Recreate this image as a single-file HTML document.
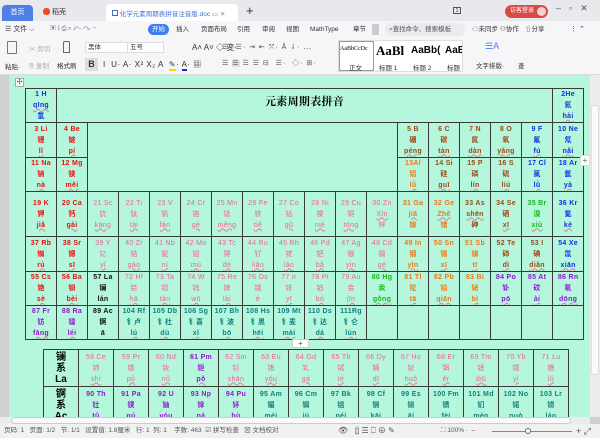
<!DOCTYPE html>
<html><head><meta charset="utf-8">
<style>
*{margin:0;padding:0;box-sizing:border-box}
body{width:600px;height:438px;overflow:hidden;position:relative;background:#d0d0d0;font-family:"Liberation Sans","Noto Sans CJK SC",sans-serif;font-size:8px;color:#333}
.a{position:absolute}
#tabs{left:0;top:0;width:600px;height:21px;background:#e9e9ed}
#menu{left:0;top:21px;width:600px;height:17px;background:#f6f6f8}
#rib{left:0;top:38px;width:600px;height:37px;background:#f6f6f8;border-bottom:1px solid #ddd}
#page{left:9px;top:75px;width:581px;height:342px;background:#b4f7dc;overflow:hidden}
table{border-collapse:collapse;table-layout:fixed;position:absolute}
td{border:1px solid #3a3a3a;text-align:center;vertical-align:middle;font-size:7px;line-height:11px;font-weight:bold;white-space:nowrap;overflow:hidden;font-family:"Liberation Sans","Noto Sans CJK SC",sans-serif;letter-spacing:0.3px}
td i{font-style:normal;text-decoration:underline wavy #d08888;text-decoration-thickness:1px;text-underline-offset:1px}
.r{color:#e81010}.p{color:#f0609a;font-weight:normal}.o{color:#f07818}.b{color:#a04818}.u{color:#1030e0}.g{color:#18b818}.v{color:#9018d0}.t{color:#108080}.k{color:#111}
.e{border:none}
#vs{left:590px;top:75px;width:10px;height:342px;background:#ececec}
#hs{left:0;top:417px;width:590px;height:7px;background:#ececec}
#st{left:0;top:424px;width:600px;height:14px;background:#f1f1f1;font-size:6.5px;color:#555;line-height:14px;white-space:nowrap}
.ui{font-size:7px;color:#333;white-space:nowrap}
.lb{font-size:10px!important;line-height:11px;color:#000;letter-spacing:0}
</style></head><body>
<div id="tabs" class="a">
 <div class="a" style="left:2px;top:5px;width:31px;height:16px;background:#4f7fe6;border-radius:4px 4px 0 0;color:#fff;font-size:7px;text-align:center;line-height:15px">首页</div>
 <div class="a ui" style="left:43px;top:6px;width:60px;height:15px;line-height:14px"><span style="display:inline-block;width:7px;height:7px;background:#f04a1a;border-radius:3px;vertical-align:-1px"></span> 稻壳</div>
 <div class="a" style="left:106px;top:4px;width:132px;height:17px;background:#fff;border-radius:4px 4px 0 0"></div>
 <div class="a" style="left:112px;top:8px;color:#4070d0;font-size:6.5px;white-space:nowrap"><span style="display:inline-block;width:6px;height:6px;border:1px solid #4070d0"></span> 化学元素周期表拼音注音版.doc <span style="color:#888">▭ ✕</span></div>
 <div class="a" style="left:246px;top:3px;font-size:13px;color:#333">+</div>
 <div class="a ui" style="left:453px;top:7px;border:1px solid #555;width:8px;height:7px;font-size:5px;text-align:center;line-height:6px">1</div>
 <div class="a" style="left:505px;top:5px;width:43px;height:13px;background:#d84c46;border-radius:7px;color:#fff;font-size:6px;line-height:13px;padding-left:5px">访客登录<span style="position:absolute;right:2px;top:2px;width:9px;height:9px;border-radius:5px;background:#f4d0ce"></span></div>
 <div class="a" style="left:556px;top:3px;font-size:9px;color:#555;letter-spacing:8px">–▫✕</div>
</div>
<div id="menu" class="a ui" style="line-height:17px">
 <span class="a" style="left:5px">☰ 文件 ⌵</span>
 <span class="a" style="left:50px;color:#666;font-size:6px">▣ ⟟ ⎙ ⌕ ↶· ↷· ▿</span>
 <span class="a" style="left:148px;top:3px;width:21px;height:11px;background:#3f7ef0;border-radius:6px;color:#fff;line-height:11px;text-align:center;font-size:6.5px">开始</span>
 <span class="a" style="left:176px;font-size:6.5px">插入</span><span class="a" style="left:201px;font-size:6.5px">页面布局</span><span class="a" style="left:237px;font-size:6.5px">引用</span><span class="a" style="left:262px;font-size:6.5px">审阅</span><span class="a" style="left:286px;font-size:6.5px">视图</span><span class="a" style="left:310px;font-size:6.5px">MathType</span><span class="a" style="left:353px;font-size:6.5px">章节</span>
 <span class="a" style="left:372px;top:3px;width:7px;height:11px;background:#ccc"></span>
 <span class="a" style="left:385px;top:2px;width:80px;height:13px;background:#ebebef;border-radius:7px;line-height:13px;padding-left:4px;color:#555;font-size:6.5px">⌕查找命令、搜索模板</span>
 <span class="a" style="left:472px;font-size:6.5px">☁未同步</span><span class="a" style="left:500px;font-size:6.5px">⚇协作</span><span class="a" style="left:525px;font-size:6.5px">⇧分享</span><span class="a" style="left:570px">⋮ ⌃</span>
</div>
<div id="rib" class="a ui">
 <span class="a" style="left:7px;top:3px;width:10px;height:13px;border:1px solid #777;border-radius:1px"></span><span class="a" style="left:5px;top:23px;font-size:6.5px">粘贴·</span>
 <span class="a" style="left:29px;top:5px;color:#aaa;font-size:6.5px">✂ 剪切</span><span class="a" style="left:29px;top:22px;color:#aaa;font-size:6.5px">⎘ 复制</span>
 <span class="a" style="left:63px;top:3px;width:7px;height:12px;border:1px solid #666;border-radius:2px 2px 0 0"></span><span class="a" style="left:57px;top:22px;font-size:6.5px">格式刷</span>
 <span class="a" style="left:85px;top:4px;width:78px;height:11px;background:#fff;border:1px solid #ddd;line-height:9px;padding-left:2px;font-size:6.5px">黑体</span>
 <span class="a" style="left:127px;top:4px;width:37px;height:11px;background:#fff;border:1px solid #ddd;line-height:9px;padding-left:2px;font-size:6.5px">五号</span>
 <span class="a" style="left:192px;top:4px;font-size:8px">A˄ A˅ ◇ 变·</span>
 <span class="a" style="left:85px;top:20px;width:13px;height:13px;background:#ddd;font-weight:bold;font-size:9px;text-align:center;line-height:13px">B</span>
 <span class="a" style="left:103px;top:21px;font-size:8px;letter-spacing:0.5px">I &nbsp;U· A· X² X₂ A &nbsp;<span style="border-bottom:2px solid #f0e000">✎</span>· <span style="border-bottom:2px solid #2020e0">A</span>· ▦</span>
 <span class="a" style="left:222px;top:4px;font-size:7px;color:#555;letter-spacing:1px">☰· ☰· ⇥ ⇤ ⤧· Å ⇃· ⋯</span>
 <span class="a" style="left:222px;top:20px;font-size:7px;color:#555;letter-spacing:1px">☰ <span style="background:#ddd">☰</span> ☰ ☰ ⊟ &nbsp;☰· &nbsp;◇· ⊞·</span>
 <div class="a" style="left:338px;top:2px;width:125px;height:32px;background:#fff;border:1px solid #ddd;overflow:hidden">
 <div class="a" style="left:0;top:0;width:35px;height:30px;border:1px solid #999"></div>
 <span class="a" style="left:1px;top:5px;font-family:'Liberation Serif',serif;font-size:6px;color:#000">AaBbCcDc</span>
 <span class="a" style="left:37px;top:2px;font-family:'Liberation Serif',serif;font-size:13px;font-weight:bold;color:#000">AaBl</span>
 <span class="a" style="left:72px;top:4px;font-size:10px;font-weight:bold;color:#000">AaBb(</span>
 <span class="a" style="left:106px;top:4px;font-size:10px;font-weight:bold;color:#000">AaBbC</span>
 <span class="a" style="left:10px;top:21px;font-size:6.5px">正文</span><span class="a" style="left:40px;top:21px;font-size:6.5px">标题 1</span><span class="a" style="left:74px;top:21px;font-size:6.5px">标题 2</span><span class="a" style="left:108px;top:21px;font-size:6.5px">标题 3</span>
 </div>
 <span class="a" style="left:485px;top:3px;font-size:9px;color:#4a7ee8">☰A</span><span class="a" style="left:476px;top:22px;font-size:6.5px">文字排版·</span>
 <span class="a" style="left:518px;top:22px;font-size:6.5px">查</span>
</div>
<div id="page" class="a">
 <div class="a" style="left:6px;top:3px;width:9px;height:9px;background:#fff;border:1px solid #aaa;font-size:7px;line-height:7px;text-align:center;color:#555">✣</div>
 <table style="left:16px;top:13px;width:558px">
  <colgroup><col span="18" style="width:31px"></colgroup>
  <tr style="height:34px"><td class="u">1 H<br><i>qīng</i><br>氢</td><td colspan="16" style="font-family:'Noto Serif CJK SC',serif;font-size:11px;color:#000;vertical-align:top;padding-top:7px">元素周期表拼音</td><td class="u">2He<br>氦<br><i>hài</i></td></tr>
  <tr style="height:35px"><td class="r">3 Li<br>锂<br><i>lǐ</i></td><td class="r">4 Be<br>铍<br><i>pí</i></td><td colspan="10" rowspan="2" class="e" style="border-bottom:1px solid #3a3a3a"></td><td class="b">5 B<br>硼<br><i>péng</i></td><td class="b">6 C<br>碳<br><i>tàn</i></td><td class="b">7 N<br>氮<br><i>dàn</i></td><td class="b">8 O<br>氧<br><i>yǎng</i></td><td class="u">9 F<br>氟<br><i>fú</i></td><td class="u">10 Ne<br>氖<br><i>nǎi</i></td></tr>
  <tr style="height:33px"><td class="r">11 Na<br>钠<br><i>nà</i></td><td class="r">12 Mg<br>镁<br><i>měi</i></td><td class="o">13Al<br>铝<br><i>lǚ</i></td><td class="b">14 Si<br>硅<br><i>guī</i></td><td class="b">15 P<br>磷<br><i>lín</i></td><td class="b">16 S<br>硫<br><i>liú</i></td><td class="u">17 Cl<br>氯<br><i>lǜ</i></td><td class="u">18 Ar<br>氩<br><i>yà</i></td></tr>
  <tr style="height:45px"><td class="r">19 K<br>钾<br><i>jiǎ</i></td><td class="r">20 Ca<br>钙<br><i>gài</i></td><td class="p">21 Sc<br>钪<br><i>kàng</i></td><td class="p">22 Ti<br>钛<br><i>tài</i></td><td class="p">23 V<br>钒<br><i>fán</i></td><td class="p">24 Cr<br>铬<br><i>gè</i></td><td class="p">25 Mn<br>锰<br><i>měng</i></td><td class="p">26 Fe<br>铁<br><i>tiě</i></td><td class="p">27 Co<br>钴<br><i>gǔ</i></td><td class="p">28 Ni<br>镍<br><i>niè</i></td><td class="p">29 Cu<br>铜<br><i>tóng</i></td><td class="p">30 Zn<br><i>Xīn</i><br>锌</td><td class="o">31 Ga<br><i>jiā</i><br>镓</td><td class="o">32 Ge<br><i>Zhě</i><br>锗</td><td class="b">33 As<br><i>shēn</i><br>砷</td><td class="b">34 Se<br>硒<br><i>xī</i></td><td class="g">35 Br<br>溴<br><i>xiù</i></td><td class="u">36 Kr<br>氪<br><i>kè</i></td></tr>
  <tr style="height:35px"><td class="r">37 Rb<br>铷<br><i>rú</i></td><td class="r">38 Sr<br>锶<br><i>sī</i></td><td class="p">39 Y<br>钇<br><i>yǐ</i></td><td class="p">40 Zr<br>锆<br><i>gào</i></td><td class="p">41 Nb<br>铌<br><i>ní</i></td><td class="p">42 Mo<br>钼<br><i>mù</i></td><td class="p">43 Tc<br>锝<br><i>dé</i></td><td class="p">44 Ru<br>钌<br><i>liǎo</i></td><td class="p">45 Rh<br>铑<br><i>lǎo</i></td><td class="p">46 Pd<br>钯<br><i>bǎ</i></td><td class="p">47 Ag<br>银<br><i>yín</i></td><td class="p">48 Cd<br>镉<br><i>gé</i></td><td class="o">49 In<br>铟<br><i>yīn</i></td><td class="o">50 Sn<br>锡<br><i>xī</i></td><td class="o">51 Sb<br>锑<br><i>tī</i></td><td class="b">52 Te<br>碲<br><i>dì</i></td><td class="b">53 I<br>碘<br><i>diǎn</i></td><td class="u">54 Xe<br>氙<br><i>xiān</i></td></tr>
  <tr style="height:34px"><td class="r">55 Cs<br>铯<br><i>sè</i></td><td class="r">56 Ba<br>钡<br><i>bèi</i></td><td class="k">57 La<br>镧<br>lán</td><td class="p">72 Hf<br>铪<br><i>hā</i></td><td class="p">73 Ta<br>钽<br><i>tǎn</i></td><td class="p">74 W<br>钨<br><i>wū</i></td><td class="p">75 Re<br>铼<br><i>lái</i></td><td class="p">76 Os<br>锇<br>é</td><td class="p">77 Ir<br>铱<br><i>yī</i></td><td class="p">78 Pt<br>铂<br><i>bó</i></td><td class="p">79 Au<br>金<br><i>jīn</i></td><td class="g">80 Hg<br>汞<br><i>gǒng</i></td><td class="o">81 Tl<br>铊<br><i>tā</i></td><td class="o">82 Pb<br>铅<br><i>qiān</i></td><td class="o">83 Bi<br>铋<br><i>bì</i></td><td class="v">84 Po<br>钋<br><i>pō</i></td><td class="v">85 At<br>砹<br><i>ài</i></td><td class="v">86 Rn<br>氡<br><i>dōng</i></td></tr>
  <tr style="height:34px"><td class="v">87 Fr<br>钫<br><i>fāng</i></td><td class="v">88 Ra<br>镭<br><i>léi</i></td><td class="k">89 Ac<br>锕<br>ā</td><td class="t">104 Rf<br>钅卢<br><i>lú</i></td><td class="t">105 Db<br>钅杜<br><i>dù</i></td><td class="t">106 Sg<br>钅喜<br><i>xǐ</i></td><td class="t">107 Bh<br>钅波<br><i>bō</i></td><td class="t">108 Hs<br>钅黑<br><i>hēi</i></td><td class="t">109 Mt<br>钅麦<br><i>mài</i></td><td class="t">110 Ds<br>钅达<br><i>dá</i></td><td class="t">111Rg<br>钅仑<br><i>lún</i></td><td></td><td></td><td></td><td></td><td></td><td></td><td></td></tr>
 </table>
 <div class="a" style="left:283px;top:264px;width:17px;height:9px;background:#fff;border:1px solid #ccc;font-size:8px;line-height:7px;text-align:center;color:#555">+</div>
 <table style="left:34px;top:274px;width:525px">
  <colgroup><col style="width:35px"><col span="14" style="width:35px"></colgroup>
  <tr style="height:37px"><td class="lb">镧<br>系<br>La</td><td class="p">58 Ce<br>铈<br><i>shì</i></td><td class="p">59 Pr<br>镨<br><i>pǔ</i></td><td class="p">60 Nd<br>钕<br><i>nǚ</i></td><td class="v">61 Pm<br>钷<br><i>pǒ</i></td><td class="p">62 Sm<br>钐<br><i>shān</i></td><td class="p">63 Eu<br>铕<br><i>yǒu</i></td><td class="p">64 Gd<br>钆<br><i>gá</i></td><td class="p">65 Tb<br>铽<br><i>tè</i></td><td class="p">66 Dy<br>镝<br><i>dī</i></td><td class="p">67 Ho<br>钬<br><i>huǒ</i></td><td class="p">68 Er<br>铒<br><i>ěr</i></td><td class="p">69 Tm<br>铥<br><i>diū</i></td><td class="p">70 Yb<br>镱<br><i>yì</i></td><td class="p">71 Lu<br>镥<br><i>lǔ</i></td></tr>
  <tr style="height:37px"><td class="lb">锕<br>系<br>Ac</td><td class="v">90 Th<br>钍<br><i>tǔ</i></td><td class="v">91 Pa<br>镤<br><i>pú</i></td><td class="v">92 U<br>铀<br><i>yóu</i></td><td class="v">93 Np<br>镎<br><i>ná</i></td><td class="v">94 Pu<br>钚<br><i>bù</i></td><td class="t">95 Am<br>镅<br><i>méi</i></td><td class="t">96 Cm<br>锔<br><i>jú</i></td><td class="t">97 Bk<br>锫<br><i>péi</i></td><td class="t">98 Cf<br>锎<br><i>kāi</i></td><td class="t">99 Es<br>锿<br><i>āi</i></td><td class="t">100 Fm<br>镄<br><i>fèi</i></td><td class="t">101 Md<br>钔<br><i>mén</i></td><td class="t">102 No<br>锘<br><i>nuò</i></td><td class="t">103 Lr<br>铹<br><i>láo</i></td></tr>
 </table>
</div>
<div id="vs" class="a"><div class="a" style="left:1px;top:30px;width:8px;height:270px;background:#fafafa;border:1px solid #ddd;border-radius:3px"></div>
 <div class="a" style="left:-10px;top:80px;width:10px;height:11px;background:#fff;border:1px solid #ddd;font-size:8px;text-align:center;line-height:9px;color:#666">+</div></div>
<div id="hs" class="a"><div class="a" style="left:11px;top:0;width:560px;height:7px;background:#fafafa;border:1px solid #ccc;border-radius:4px"></div></div>
<div id="st" class="a">
 <span class="a" style="left:4px">页码: 1 &nbsp; 页面: 1/2 &nbsp; 节: 1/1 &nbsp; 设置值: 1.8厘米 &nbsp; 行: 1 &nbsp;列: 1 &nbsp;&nbsp; 字数: 463 &nbsp;☑ 拼写检查 &nbsp; ⊠ 文档校对</span>
 <span class="a" style="left:338px;font-size:8px">👁 &nbsp; <span style="background:#ddd">▯</span> ☰ ⎕ ⊕ ✎</span>
 <span class="a" style="left:441px">⛶ 100% · &nbsp;–</span>
 <div class="a" style="left:492px;top:7px;width:80px;height:1px;background:#888"></div>
 <div class="a" style="left:525px;top:4px;width:6px;height:6px;border:1px solid #666;border-radius:3px;background:#fff"></div>
 <span class="a" style="left:576px;font-size:9px">+ ⤢</span>
</div>
</body></html>
